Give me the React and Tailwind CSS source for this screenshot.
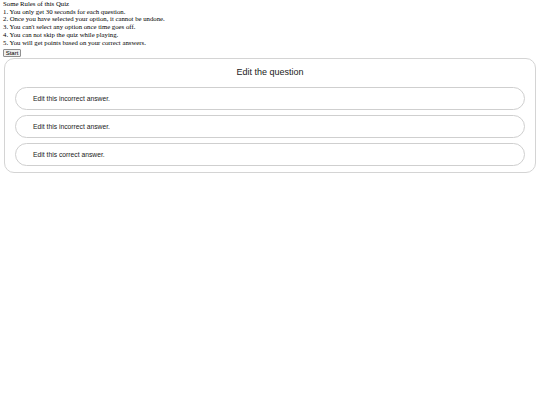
import React from 'react';

const rules = [
    '1. You only get 30 seconds for each question.',
    '2. Once you have selected your option, it cannot be undone.',
    "3. You can't select any option once time goes off.",
    '4. You can not skip the quiz while playing.',
    '5. You will get points based on your correct answers.',
];

const answers = [
    'Edit this incorrect answer.',
    'Edit this incorrect answer.',
    'Edit this correct answer.',
];

export default function App() {
    return (
        <div className="min-h-[405px] w-[540px] bg-white">
            <div className="pl-[3px] text-[6.75px] leading-[7.7px] text-black" style={{ fontFamily: '"Liberation Serif", serif' }}>
                <div>Some Rules of this Quiz</div>
                {rules.map((r) => (
                    <div key={r}>{r}</div>
                ))}
            </div>
            <div className="flex pl-[3px] pt-[2.5px]">
                <button
                    className="flex h-[8.5px] w-[18px] items-center justify-center rounded-[1px] border border-[#8f8f8f] bg-[#efefef] text-[6px] leading-none text-black"
                    style={{ fontFamily: '"Liberation Sans", Arial, sans-serif' }}
                >
                    Start
                </button>
            </div>
            <div
                className="mx-[4px] mt-[1px] rounded-[10px] border border-[#d4d4d4] px-[10px] pt-[7px] pb-[6px]"
                style={{ fontFamily: '"Liberation Sans", Arial, sans-serif' }}
            >
                <h2 className="text-center text-[9px] leading-[12px] text-[#222]">Edit the question</h2>
                <div className="mt-[9px] flex flex-col gap-[5px]">
                    {answers.map((a, i) => (
                        <div
                            key={i}
                            className="flex h-[23px] items-center rounded-full border border-[#cfcfcf] pl-[17px] text-[6.75px] text-[#222]"
                        >
                            {a}
                        </div>
                    ))}
                </div>
            </div>
        </div>
    );
}
